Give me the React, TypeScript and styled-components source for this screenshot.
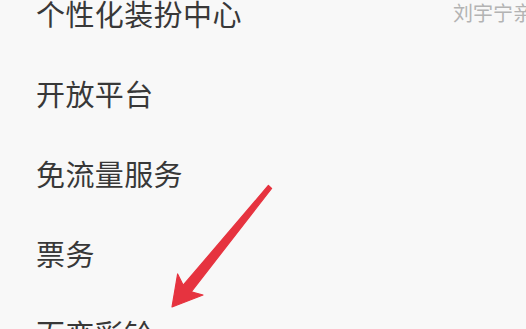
import React from "react";
import styled, { createGlobalStyle } from "styled-components";

const Global = createGlobalStyle`
  html, body {
    margin: 0;
    padding: 0;
    background: #f8f8f8;
    overflow: hidden;
  }
  body {
    width: 526px;
    height: 329px;
    font-family: "Noto Sans CJK SC", "Noto Sans", sans-serif;
  }
`;

const Screen = styled.div`
  position: relative;
  width: 526px;
  height: 329px;
  overflow: hidden;
  background: #f8f8f8;
`;

const List = styled.ul`
  list-style: none;
  margin: -27px 0 0 0;
  padding: 0 0 0 36px;
  display: flex;
  flex-direction: column;
`;

const Row = styled.li`
  display: flex;
  align-items: center;
  height: 80px;
  white-space: nowrap;
`;

const Label = styled.span`
  flex: 1;
  font-size: 29px;
  line-height: 80px;
  color: #383838;
  letter-spacing: 0.4px;
`;

const Value = styled.span`
  width: 73px;
  font-size: 20px;
  color: #b3b3b3;
  white-space: nowrap;
  align-self: flex-start;
  line-height: 20px;
  margin-top: 30px;
`;

const Arrow = styled.svg`
  position: absolute;
  left: 0;
  top: 0;
  pointer-events: none;
`;

const items = [
  { label: "个性化装扮中心", value: "刘宇宁亲" },
  { label: "开放平台" },
  { label: "免流量服务" },
  { label: "票务" },
  { label: "百变彩铃" },
];

export default function App() {
  return (
    <Screen>
      <Global />
      <List>
        {items.map((it) => (
          <Row key={it.label}>
            <Label>{it.label}</Label>
            {it.value && <Value>{it.value}</Value>}
          </Row>
        ))}
      </List>
      <Arrow width="526" height="329" viewBox="0 0 526 329">
        <polygon
          points="172,307 203,295 191.2,291.8 271.6,188.5 268.4,185.5 183.2,285.2 177.6,274"
          fill="#e6333f"
          stroke="#e6333f"
          strokeWidth="1.2"
          strokeLinejoin="round"
        />
      </Arrow>
    </Screen>
  );
}
